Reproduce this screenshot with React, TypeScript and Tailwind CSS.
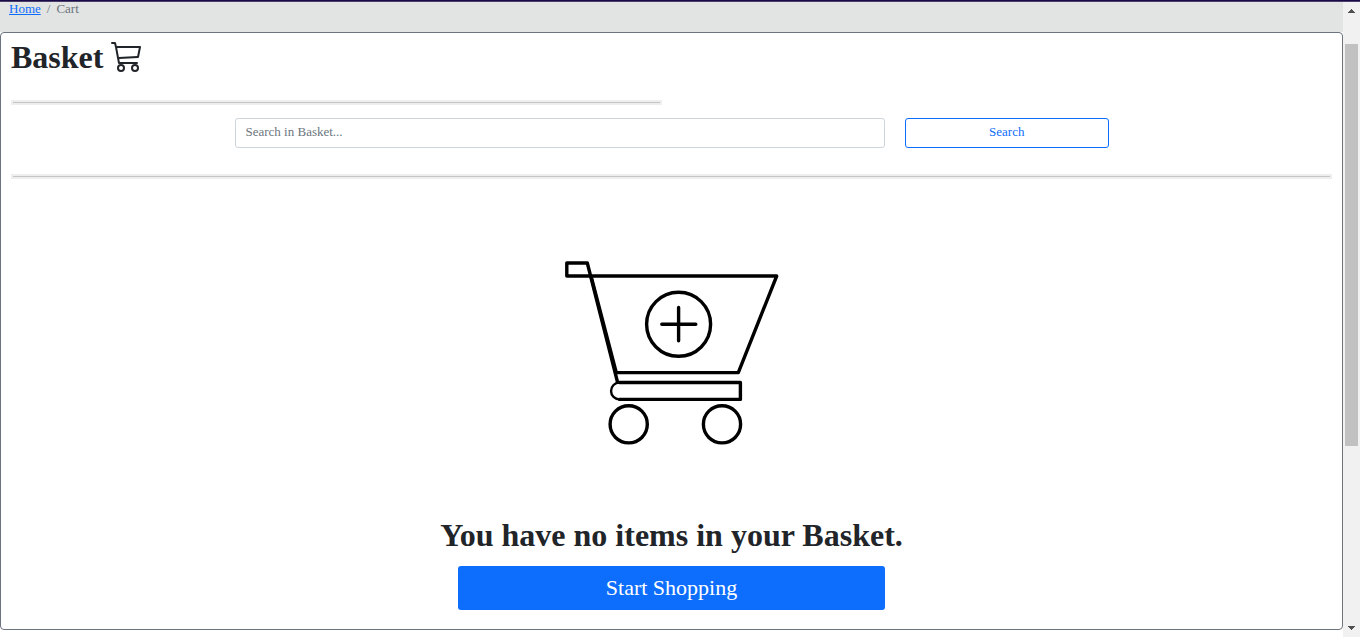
import { BsCart3 } from "react-icons/bs";

function EmptyCartDrawing() {
  return (
    <svg
      viewBox="551 250 241 205"
      className="mx-auto mt-[71px] h-[205px] w-[241px]"
      fill="none"
      stroke="#000"
      strokeWidth="3.4"
      strokeLinejoin="round"
      strokeLinecap="round"
      role="img"
      aria-label="Empty basket"
    >
      <path d="M590 276H566.8V263H587.3L617.5 382" />
      <path d="M591 276H776.7L738.3 372.6H616.3Z" />
      <circle cx="678.6" cy="324.3" r="32" />
      <path d="M678.6 307.5V340.7M661.8 324.3H695.8" />
      <path d="M619.5 382.5H740.4V399.4H619.5" />
      <path d="M619.5 382.5A8.4 8.4 0 0 0 619.5 399.4" strokeWidth="2.4" />
      <circle cx="628.7" cy="424.3" r="18.6" />
      <circle cx="722" cy="424.3" r="18.6" />
    </svg>
  );
}

function Divider({ className }: { className: string }) {
  return (
    <div role="separator" className={`h-[5px] bg-[#eeeeee] p-0.5 ${className}`}>
      <div className="h-px bg-[#c4c4c4]" />
    </div>
  );
}

function ScrollTrack() {
  return (
    <div aria-hidden="true" className="flex w-[17px] shrink-0 flex-col items-center bg-[#f1f1f1]">
      <svg viewBox="0 0 7 4" className="mt-[7px] h-1 w-[7px]" fill="#505050" shapeRendering="crispEdges">
        <path d="M3 0h1v1h1v1h1v1h1v1H0V3h1V2h1V1h1z" />
      </svg>
      <div className="mt-[31px] h-[402px] w-[13px] bg-[#c1c1c1]" />
      <svg viewBox="0 0 7 4" className="mt-auto mb-[7px] h-1 w-[7px]" fill="#505050" shapeRendering="crispEdges">
        <path d="M0 0h7v1H6v1H5v1H4v1H3V3H2V2H1V1H0z" />
      </svg>
    </div>
  );
}

export default function App() {
  return (
    <div className="flex min-h-screen flex-col bg-white font-['Liberation_Serif',serif] text-[13px] text-[#212529]">
      <div className="h-0.5 border-b border-[#4a3f6b] bg-[#1b0a4a]" />
      <div className="flex grow">
        <div className="min-w-0 grow">
          <nav aria-label="Breadcrumb" className="h-[30px] bg-[#e2e4e3] px-[9px]">
            <ol className="flex gap-1.5 leading-[14px] text-[#6c757d]">
              <li>
                <a href="#home" className="text-[#0d6efd] underline">Home</a>
              </li>
              <li aria-hidden="true">/</li>
              <li aria-current="page">Cart</li>
            </ol>
          </nav>
          <main className="flex flex-col rounded-[4px] border border-[#6c757d] px-2.5 pt-[5px] pb-[19px]">
            <h1 className="text-[32px] leading-[38px] font-bold">
              Basket <BsCart3 className="inline size-8 align-[-4px]" />
            </h1>
            <div className="mt-6 grid grid-cols-12 gap-x-5">
              <Divider className="col-span-6" />
            </div>
            <form className="mt-[13px] grid grid-cols-12 gap-x-5" onSubmit={(e) => e.preventDefault()}>
              <input
                type="text"
                aria-label="Search in Basket"
                placeholder="Search in Basket..."
                className="col-span-6 col-start-3 h-[30px] rounded-[3px] border border-[#ced4da] px-2.5 pb-0.5 placeholder:text-[#6c757d]"
              />
              <button
                type="submit"
                className="col-span-2 h-[30px] rounded-[3px] border border-[#0d6efd] pb-0.5 text-[#0d6efd]"
              >
                Search
              </button>
            </form>
            <Divider className="mt-[26px]" />
            <EmptyCartDrawing />
            <h2 className="mt-[61px] text-center text-[32px] leading-[38px] font-bold">
              You have no items in your Basket.
            </h2>
            <div className="mt-3 grid grid-cols-12 gap-x-5">
              <a
                href="#shop"
                className="col-span-4 col-start-5 rounded-[3px] bg-[#0d6efd] text-center text-[22px] leading-[44px] text-white"
              >
                Start Shopping
              </a>
            </div>
          </main>
        </div>
        <ScrollTrack />
      </div>
    </div>
  );
}
